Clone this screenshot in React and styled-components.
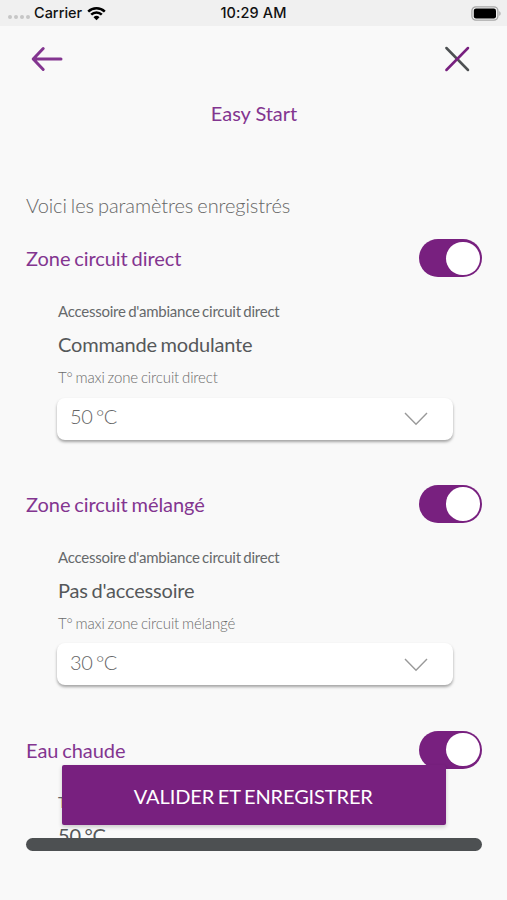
import styled, { createGlobalStyle } from "styled-components";

const zones = [
  {
    title: "Zone circuit direct",
    label: "Accessoire d'ambiance circuit direct",
    value: "Commande modulante",
    hint: "T° maxi zone circuit direct",
    temperature: "50 °C",
  },
  {
    title: "Zone circuit mélangé",
    label: "Accessoire d'ambiance circuit direct",
    value: "Pas d'accessoire",
    hint: "T° maxi zone circuit mélangé",
    temperature: "30 °C",
  },
  {
    title: "Eau chaude",
    label: "T° eau chaude",
    value: "50 °C",
  },
]

function StatusBar() {
  return (
    <Status>
      <Carrier>
        <Dots><i /><i /><i /><i /></Dots>
        <span>Carrier</span>
        <svg width="19" height="15" viewBox="0 0 19 15" fill="none" stroke="#000" strokeWidth="2.5">
          <path d="M1.2 5.6a11.8 11.8 0 0 1 16.6 0" />
          <path d="M4.2 8.7a7.5 7.5 0 0 1 10.6 0" />
          <path d="M9.5 14.2 6.5 11.2a4.3 4.3 0 0 1 6 0z" fill="#000" stroke="none" />
        </svg>
      </Carrier>
      <Time>10:29 AM</Time>
      <Battery>
        <svg width="31" height="15" viewBox="0 0 31 15">
          <rect x="1.9" y="0.9" width="26" height="13.2" rx="4" fill="#f4f4f4" stroke="#a6a6a6" strokeWidth="1.3" />
          <rect x="3.8" y="2.6" width="22.2" height="9.8" rx="2.2" fill="#000" />
          <path d="M29.3 5.2c1.7.6 1.7 4 0 4.6z" fill="#a6a6a6" />
        </svg>
      </Battery>
    </Status>
  )
}

function Zone({ zone }) {
  return (
    <Section>
      <SectionHeader>
        <SectionTitle>{zone.title}</SectionTitle>
        <Toggle role="switch" aria-checked="true"><Knob /></Toggle>
      </SectionHeader>
      <Details>
        <Label>{zone.label}</Label>
        <Value>{zone.value}</Value>
        {zone.hint && <Label $light>{zone.hint}</Label>}
        {zone.temperature && (
          <Select>
            <span>{zone.temperature}</span>
            <svg width="24" height="14" viewBox="0 0 24 14" fill="none" stroke="#999" strokeWidth="1.4">
              <path d="M1 1 12 12.2 23 1" />
            </svg>
          </Select>
        )}
      </Details>
    </Section>
  )
}

function App() {
  return (
    <Screen>
      <GlobalStyle />
      <StatusBar />
      <Nav>
        <IconButton aria-label="Retour">
          <svg width="32" height="26" viewBox="0 0 32 26" fill="none" stroke="#833590" strokeWidth="3" strokeLinecap="round" strokeLinejoin="round">
            <path d="M12.2 2.5 2.2 13l10 10.5M2.5 13h27.5" />
          </svg>
        </IconButton>
        <IconButton aria-label="Fermer">
          <svg width="26" height="26" viewBox="0 0 26 26" fill="none" strokeWidth="2.5" strokeLinecap="round">
            <path d="M2.4 2 24 24" stroke="#4d5052" />
            <path d="M24 2 2.4 24" stroke="#78207f" />
          </svg>
        </IconButton>
      </Nav>
      <Title>Easy Start</Title>
      <Content>
        <Intro>Voici les paramètres enregistrés</Intro>
        {zones.map((zone) => <Zone key={zone.title} zone={zone} />)}
      </Content>
      <BottomBar />
      <SubmitButton>VALIDER ET ENREGISTRER</SubmitButton>
    </Screen>
  )
}

export default App;

const GlobalStyle = createGlobalStyle`
  body {
    margin: 0;
    background: #f9f9f9;
  }
  * {
    box-sizing: border-box;
  }
`

const Screen = styled.div`
  position: relative;
  display: flex;
  flex-direction: column;
  width: 507px;
  height: 900px;
  overflow: hidden;
  background: #f9f9f9;
  font-family: Lato, sans-serif;
  color: #4d5052;
`

const Status = styled.div`
  display: grid;
  grid-template-columns: 1fr auto 1fr;
  align-items: center;
  flex: none;
  height: 26px;
  padding: 0 6px 0 8px;
  background: #f0f0f0;
  color: #111;
  font-family: Inter, sans-serif;
  font-size: 14.5px;
  font-weight: 500;
`

const Carrier = styled.div`
  display: flex;
  align-items: center;
  gap: 5px;
  line-height: 18px;
  > span {
    margin-left: -1px;
    padding-bottom: 1px;
  }
`

const Time = styled.span`
  padding: 0 2px 1px 0;
  letter-spacing: 0.1px;
`

const Dots = styled.div`
  display: flex;
  gap: 2px;
  padding-top: 8px;
  i {
    width: 4px;
    height: 4px;
    border-radius: 50%;
    background: #c6c6c6;
  }
`

const Battery = styled.div`
  display: flex;
  justify-content: flex-end;
`

const Nav = styled.div`
  display: flex;
  justify-content: space-between;
  align-items: center;
  flex: none;
  height: 65px;
  padding: 0 37px 0 30.5px;
`

const IconButton = styled.button`
  display: flex;
  padding: 0;
  border: 0;
  background: none;
`

const Title = styled.h1`
  flex: none;
  margin: 0;
  padding-left: 1px;
  height: 46px;
  line-height: 44px;
  font-size: 20px;
  font-weight: 400;
  letter-spacing: -0.05px;
  text-align: center;
  color: #833590;
`

const Content = styled.div`
  flex: none;
  height: 701px;
  padding: 53px 25px 0 26px;
  overflow: hidden;
`

const Intro = styled.p`
  margin: 0;
  height: 49.4px;
  line-height: 30px;
  font-size: 20px;
  font-weight: 300;
  letter-spacing: -0.08px;
  word-spacing: -1.3px;
  color: #666;
`

const Section = styled.section`
  height: 245.6px;
`

const SectionHeader = styled.div`
  display: flex;
  justify-content: space-between;
  align-items: center;
  height: 38px;
`

const SectionTitle = styled.h2`
  margin: 0;
  font-size: 20px;
  font-weight: 400;
  letter-spacing: -0.05px;
  word-spacing: -1.3px;
  color: #833590;
`

const Toggle = styled.div`
  display: flex;
  justify-content: flex-end;
  align-items: center;
  width: 63px;
  height: 38px;
  padding-right: 2.5px;
  border-radius: 19px;
  background: #78207f;
`

const Knob = styled.div`
  width: 33.5px;
  height: 33.5px;
  border-radius: 50%;
  background: #fff;
`

const Details = styled.div`
  padding: 23.8px 29px 0 32px;
`

const Label = styled.div`
  line-height: 20px;
  font-size: 15px;
  font-weight: ${props => props.$light ? 300 : 400};
  letter-spacing: ${props => props.$light ? "-0.12px" : "-0.24px"};
  word-spacing: -1.1px;
  color: ${props => props.$light ? "#6c6c6c" : "#66696b"};
`

const Value = styled.div`
  height: 46px;
  line-height: 46px;
  font-size: 20px;
  letter-spacing: -0.18px;
  word-spacing: -1.3px;
  color: #55585a;
`

const Select = styled.div`
  display: flex;
  justify-content: space-between;
  align-items: center;
  height: 42px;
  margin: 10.4px 0 0 -1px;
  padding: 0 25px 5px 13px;
  border-radius: 8px;
  background: #fff;
  box-shadow: 0 2px 3px rgba(0, 0, 0, .35);
  font-size: 20px;
  font-weight: 300;
  letter-spacing: -0.45px;
  word-spacing: -1.3px;
  color: #666;
  svg {
    position: relative;
    top: 3px;
  }
`

const BottomBar = styled.div`
  flex: none;
  height: 13px;
  margin: 0 25px 0 26px;
  border-radius: 6.5px;
  background: #4d5052;
`

const SubmitButton = styled.button`
  position: absolute;
  left: 61.6px;
  bottom: 75px;
  width: 384.4px;
  height: 60px;
  padding: 2px 1px 0 0;
  border: 0;
  border-radius: 2px;
  background: #78207f;
  box-shadow: 0 2px 4px rgba(0, 0, 0, .2);
  color: #fff;
  font-family: inherit;
  font-size: 20px;
  letter-spacing: -0.12px;
  word-spacing: -1.3px;
`
